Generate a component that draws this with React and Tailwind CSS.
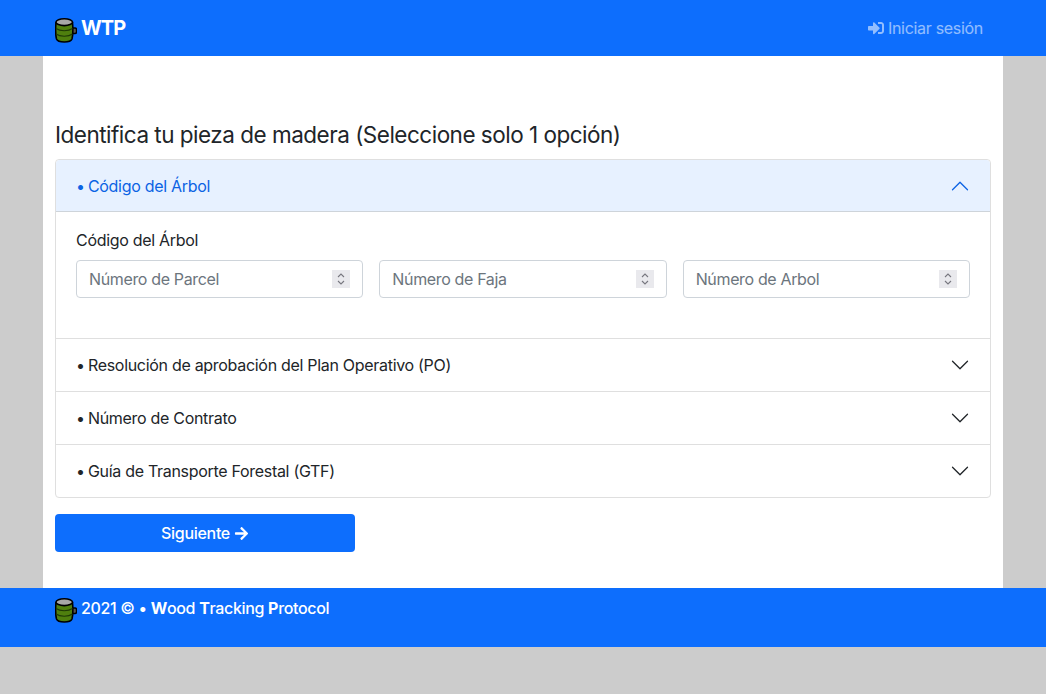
import React from 'react';
import { FaSignInAlt, FaArrowRight } from 'react-icons/fa';

const Barrel = ({ className = '' }) => (
    <svg width="22" height="25" viewBox="0 0 22 25" className={`shrink-0 ${className}`}>
        <rect x="17" y="10" width="4.500" height="5.500" rx="1.500" fill="#555" stroke="#000" strokeWidth="1.400" />
        <path d="M1 4.500 C0.500 10 0.500 17 1.500 21 C3 25 15.500 25 17 21 C18 17 18 10 17.500 4.500 Z" fill="#4f7f0e" stroke="#000" strokeWidth="1.600" />
        <path d="M1 10.500 C5 13.500 13.500 13.500 17.500 10.500 M1 16 C5 19 13.500 19 17.500 16" fill="none" stroke="#1f3a05" strokeWidth="1.100" />
        <ellipse cx="9.250" cy="4.200" rx="8.250" ry="3.400" fill="#a8a8a8" stroke="#000" strokeWidth="1.600" />
    </svg>
);

const Chevron = ({ up }) => (
    <svg width="20" height="20" viewBox="0 0 16 16" fill={up ? '#0c63e4' : '#212529'} className={up ? 'rotate-180' : ''}>
        <path fillRule="evenodd" d="M1.646 4.646a.5.5 0 0 1 .708 0L8 10.293l5.646-5.647a.5.5 0 0 1 .708.708l-6 6a.5.5 0 0 1-.708 0l-6-6a.5.5 0 0 1 0-.708z" />
    </svg>
);

const NumberField = ({ placeholder }) => (
    <div className="relative flex-1">
        <input
            type="text"
            placeholder={placeholder}
            className="w-full h-[38px] px-3 border border-[#ced4da] rounded bg-white text-base tracking-[-0.35px] text-[#212529] placeholder:text-[#6c757d] outline-none"
        />
        <span className="absolute right-[13px] top-[10px] w-[18px] h-[18px] bg-[#e9e9ed] flex items-center justify-center">
            <svg width="10" height="14" viewBox="0 0 10 14" fill="none" stroke="#77777f" strokeWidth="1.1">
                <path d="M2 5 L5 2 L8 5 M2 9 L5 12 L8 9" />
            </svg>
        </span>
    </div>
);

const AccordionRow = ({ label }) => (
    <div className="h-[53px] border-t border-[#dfdfdf] px-5 flex items-center justify-between text-[#212529]">
        <span><span className="-mr-px">•</span> {label}</span>
        <Chevron />
    </div>
);

export default function App() {
    return (
        <div className="min-h-screen bg-[#cccccc] font-['Inter',sans-serif] text-base tracking-[-0.3px] text-[#212529]">
            <nav className="h-14 bg-[#0d6efd] flex items-center justify-between pl-[55px] pr-[63px]">
                <div className="flex items-center gap-1 text-white text-xl font-bold tracking-[-0.9px]">
                    <Barrel className="mt-[5px]" /> WTP
                </div>
                <a className="flex items-center gap-1 text-white/55 font-normal">
                    <FaSignInAlt size={16} /> Iniciar sesión
                </a>
            </nav>

            <main className="w-[960px] mx-auto bg-white px-3 pt-16 pb-9">
                <h4 className="text-[22.5px] leading-[29px] font-normal tracking-[-0.5px] mb-2.5">Identifica tu pieza de madera (Seleccione solo 1 opción)</h4>

                <div className="border border-[#dfdfdf] rounded">
                    <div className="h-[52px] bg-[#e7f1ff] text-[#0c63e4] px-5 flex items-center justify-between rounded-t border-b border-[#ced4da]">
                        <span><span className="-mr-px">•</span> Código del Árbol</span>
                        <Chevron up />
                    </div>
                    <div className="px-5 pt-4 pb-10">
                        <label className="block leading-6 mb-2">Código del Árbol</label>
                        <div className="flex gap-4">
                            <NumberField placeholder="Número de Parcel" />
                            <NumberField placeholder="Número de Faja" />
                            <NumberField placeholder="Número de Arbol" />
                        </div>
                    </div>
                    <AccordionRow label="Resolución de aprobación del Plan Operativo (PO)" />
                    <AccordionRow label="Número de Contrato" />
                    <AccordionRow label="Guía de Transporte Forestal (GTF)" />
                </div>

                <button className="mt-4 w-[300px] h-[38px] bg-[#0d6efd] text-white rounded flex items-center justify-center gap-1 font-medium">
                    Siguiente <FaArrowRight size={15} />
                </button>
            </main>

            <footer className="h-[59px] bg-[#0d6efd] pl-[55px] pt-2 flex items-start gap-1 text-white font-medium tracking-[-0.33px]">
                <Barrel className="mt-[2px]" />
                <span>2021 © • <b>W</b>ood <b>T</b>racking <b>P</b>rotocol</span>
            </footer>
        </div>
    );
}
